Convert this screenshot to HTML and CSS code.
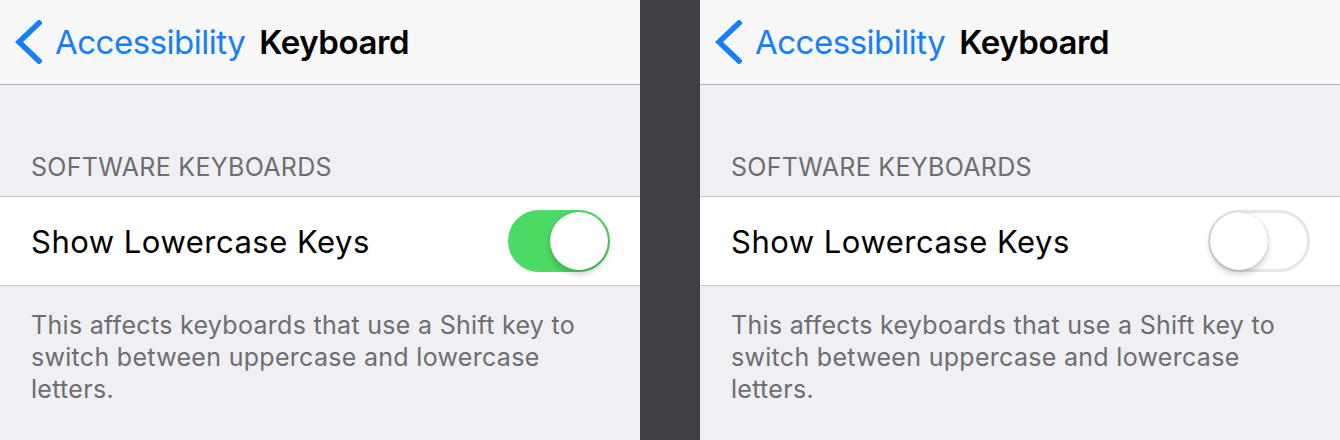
FILE: index.html
```html
<!DOCTYPE html>
<html lang="en">
<head>
    <meta charset="UTF-8">
    <title>Keyboard</title>
    <link rel="stylesheet" href="styles.css">
</head>
<body>
    <div class="screen">
        <div class="navbar">
            <a class="back" href="#">
                <svg class="chevron" width="28" height="44" viewBox="0 0 28 44"><polyline points="25,3 5,22 25,41" fill="none" stroke="#157efb" stroke-width="5.5" stroke-linecap="square"/></svg>
                <span>Accessibility</span>
            </a>
            <span class="title">Keyboard</span>
        </div>
        <div class="section-header">SOFTWARE KEYBOARDS</div>
        <div class="cell">
            <span class="label">Show Lowercase Keys</span>
            <div class="switch on"><div class="knob"></div></div>
        </div>
        <div class="footer">This affects keyboards that use a Shift key to switch between uppercase and lowercase letters.</div>
    </div>

    <div class="divider"></div>

    <div class="screen">
        <div class="navbar">
            <a class="back" href="#">
                <svg class="chevron" width="28" height="44" viewBox="0 0 28 44"><polyline points="25,3 5,22 25,41" fill="none" stroke="#157efb" stroke-width="5.5" stroke-linecap="square"/></svg>
                <span>Accessibility</span>
            </a>
            <span class="title">Keyboard</span>
        </div>
        <div class="section-header">SOFTWARE KEYBOARDS</div>
        <div class="cell">
            <span class="label">Show Lowercase Keys</span>
            <div class="switch"><div class="knob"></div></div>
        </div>
        <div class="footer">This affects keyboards that use a Shift key to switch between uppercase and lowercase letters.</div>
    </div>
</body>
</html>
```

FILE: styles.css
```css
body {
    display: flex;
    margin: 0;
    height: 440px;
    overflow: hidden;
    font-family: Inter, "Liberation Sans", sans-serif;
    background-color: #efeff4;
}
.screen {
    width: 640px;
    flex: none;
    background-color: #efeff4;
}
.divider {
    width: 60px;
    flex: none;
    background-color: #403f44;
}
.navbar {
    height: 84px;
    display: flex;
    align-items: center;
    background-color: #f7f7f8;
    border-bottom: 1px solid #b1b1b4;
}
.back {
    display: flex;
    align-items: center;
    color: #157efb;
    text-decoration: none;
    font-size: 33px;
    letter-spacing: -0.5px;
    margin-left: 14px;
}
.chevron {
    margin-right: 13px;
}
.title {
    font-size: 33px;
    font-weight: 600;
    letter-spacing: -0.4px;
    color: #000;
    margin-left: 14px;
}
.section-header {
    padding: 67px 31px 14px;
    font-size: 25px;
    line-height: 30px;
    letter-spacing: 0.3px;
    color: #6d6d72;
}
.cell {
    height: 88px;
    display: flex;
    align-items: center;
    justify-content: space-between;
    padding: 0 30px 0 31px;
    background-color: #fff;
    border-top: 1px solid #c8c7cc;
    border-bottom: 1px solid #c8c7cc;
}
.label {
    font-size: 31px;
    letter-spacing: 0.5px;
    color: #000;
}
.switch {
    position: relative;
    width: 102px;
    height: 62px;
    box-sizing: border-box;
    border-radius: 31px;
    border: 3px solid #e5e5ea;
    background-color: #fff;
}
.switch.on {
    border-color: #4cd964;
    background-color: #4cd964;
}
.knob {
    position: absolute;
    top: -1px;
    left: -1px;
    width: 58px;
    height: 58px;
    border-radius: 50%;
    background-color: #fff;
    box-shadow: 0 4px 6px rgba(0, 0, 0, 0.2), 0 0 1px rgba(0, 0, 0, 0.3);
}
.switch.on .knob {
    left: auto;
    right: -1px;
}
.footer {
    padding: 23px 31px;
    font-size: 25px;
    line-height: 32px;
    letter-spacing: 0.3px;
    color: #6d6d72;
}
```
